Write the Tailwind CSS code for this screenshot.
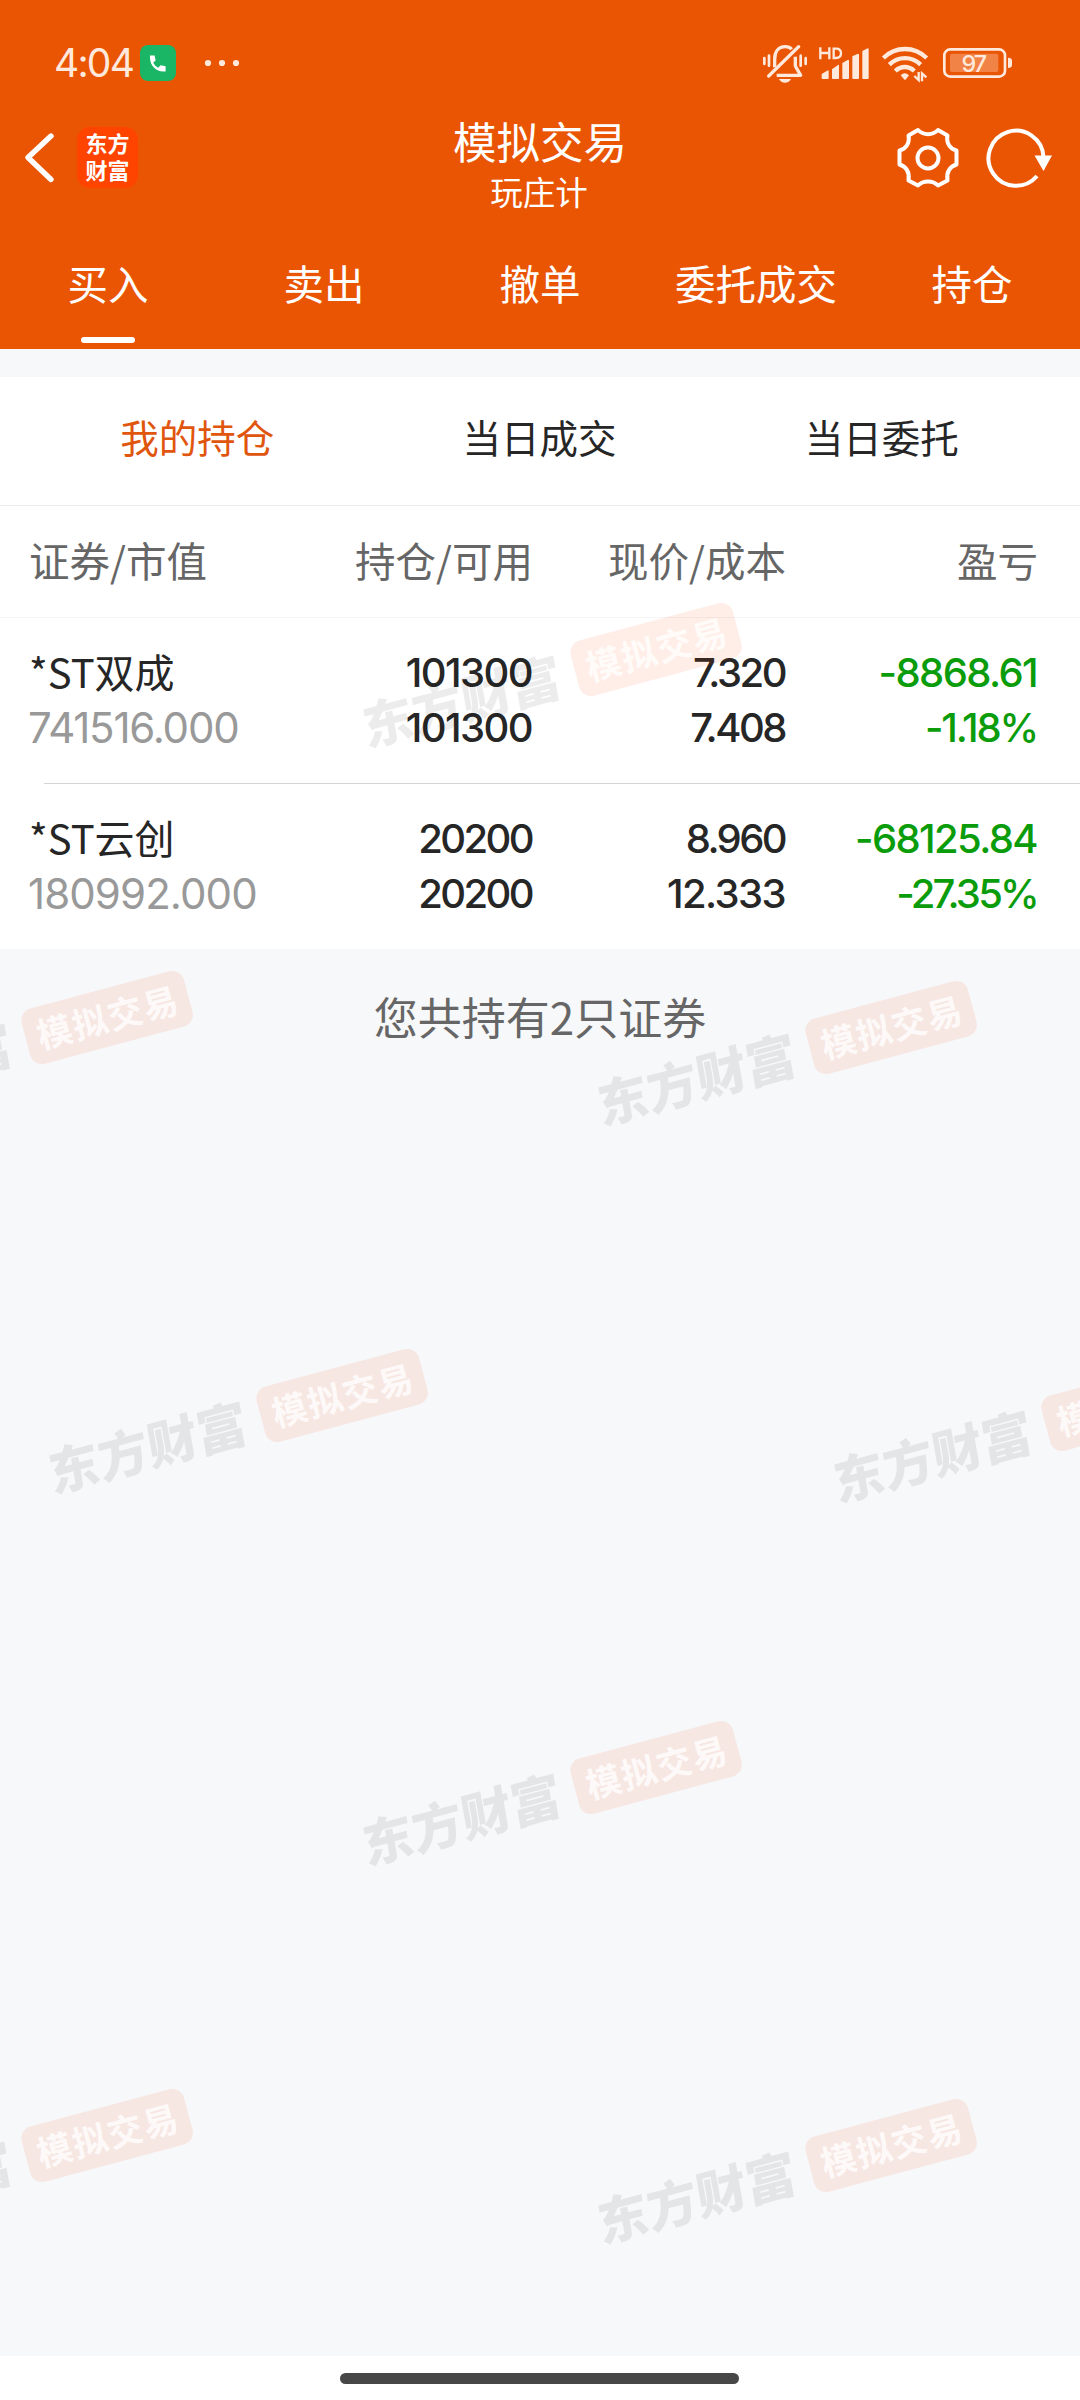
<!DOCTYPE html>
<html lang="zh-CN">
<head>
  <meta charset="UTF-8" />
  <meta name="viewport" content="width=device-width, initial-scale=1" />
  <title>模拟交易</title>
  <!-- Tailwind CSS -->
  <script src="https://cdn.jsdelivr.net/npm/@tailwindcss/browser@4"></script>
</head>
<body class="bg-white">
  <div class="relative flex h-[2400px] w-[1080px] flex-col overflow-hidden bg-[#f7f8fa] font-['Noto_Sans_CJK_SC',sans-serif] text-[#262626]">

    <header class="flex h-[349px] flex-col bg-[#ea5504] text-white">
      <!-- Status bar -->
      <div class="flex h-[106px] items-start pt-[44px] pl-[54px] text-[#ffe9dc]">
        <span class="h-[38px] w-[86px] font-['Inter',sans-serif] text-[39px] leading-[38px] tracking-[-1.8px]">4:04</span>
        <svg class="mt-px h-9 w-9" viewBox="0 0 36 36">
          <rect width="36" height="36" rx="8" fill="#1bb566" />
          <path d="M10 10.5h4.600l1 5-2.400 2.200c1.300 2.400 2.800 3.800 5 5l2.400-2.400 5 1v5.200h-2.200C16 26.500 10 20.500 10 12.700z" fill="#fff" />
        </svg>
        <svg class="mt-[15px] ml-[28px] h-2 w-[36px]" viewBox="0 0 36 8" fill="#ffe9dc">
          <circle cx="4" cy="4" r="3.100" /><circle cx="18" cy="4" r="3.100" /><circle cx="32" cy="4" r="3.100" />
        </svg>
        <!-- Muted bell -->
        <svg class="ml-auto h-10 w-[46px]" viewBox="66 72 138 120" fill="none" stroke="#ffe9dc" stroke-width="10">
          <path d="M86 168L176 80" stroke-linecap="round" />
          <path d="M104 142v-24c0-24 12-38 31-38 9 0 16 3 20 8M166 110v28l16 28H110" stroke-linejoin="round" />
          <path d="M117 177h36c-3 7-10 11-18 11s-15-4-18-11z" fill="#ffe9dc" stroke="none" />
          <path d="M73 114v18M87 107v30M182 107v30M197 114v18" stroke-linecap="round" stroke-width="8" />
        </svg>
        <!-- Signal -->
        <svg class="ml-[10px] h-10 w-[52px]" viewBox="234 72 156 120" fill="#ffe9dc">
          <path d="M241 82v36M268 82v36M241 99h27M281 86v28h7c10 0 15-5 15-14s-5-14-15-14z" fill="none" stroke="#ffe9dc" stroke-width="7" />
          <path d="M245 162l19-11q2 0 2 3v20q0 3-3 3h-15q-3 0-3-3zM276 148l19-14q2 0 2 3v37q0 3-3 3h-15q-3 0-3-3zM307 129l17-10q3 0 3 3v52q0 3-3 3h-14q-3 0-3-3zM337 109l17-8q3 0 3 3v70q0 3-3 3h-14q-3 0-3-3zM367 93l16-8q3 0 3 3v86q0 3-3 3h-13q-3 0-3-3z" />
        </svg>
        <!-- Wifi -->
        <svg class="ml-[11px] h-10 w-[48px]" viewBox="423 72 144 120" fill="none" stroke="#ffe9dc" stroke-width="13">
          <path d="M430 114c37-36 93-36 130 0M448 134c27-26 67-26 94 0M466 153c17-16 40-16 57 0" />
          <path d="M482 166q12-12 25 0l-9 12q-3 3-6 0z" fill="#ffe9dc" stroke="none" />
          <path d="M536 156v24l-13-12M546 184v-24l13 12" stroke-width="7" />
        </svg>
        <!-- Battery -->
        <svg class="mr-[67px] ml-[13px] h-10 w-[71px]" viewBox="606 72 213 120">
          <rect x="613" y="88" width="182" height="82" rx="18" fill="none" stroke="#ffe9dc" stroke-width="8" />
          <rect x="630" y="101" width="145" height="55" rx="6" fill="#f28346" />
          <path d="M804 113q12 0 12 9v13q0 9-12 9z" fill="#ffe9dc" />
          <text x="700" y="155" text-anchor="middle" font-family="Inter, sans-serif" font-size="70" letter-spacing="-6" font-weight="500" fill="#ffe9dc">97</text>
        </svg>
      </div>

      <!-- Title bar -->
      <div class="grid h-[116px] grid-cols-[1fr_240px_1fr]">
        <div class="flex items-start pt-[21px] pl-[23px]">
          <svg class="mt-1 h-[54px] w-8" viewBox="0 0 32 54" fill="none" stroke="#fff" stroke-width="5.400" stroke-linecap="round" stroke-linejoin="round"><path d="M28 5L5 26.500l23 22" /></svg>
          <div class="ml-[22px] flex h-[61px] w-[61px] flex-col items-center rounded-[13px] bg-[#ff4400] pt-[2px] text-[22px] leading-[27px] font-bold">
            <span>东方</span>
            <span>财富</span>
          </div>
        </div>
        <div class="text-center">
          <h1 class="h-[60px] text-[43.5px] leading-[69px]">模拟交易</h1>
          <p class="pr-[2px] text-[32.5px] leading-[49px]">玩庄计</p>
        </div>
        <div class="flex items-start justify-end pt-[20px] pr-[26px]">
          <svg class="h-16 w-16" viewBox="-32 -32 64 64" fill="none" stroke="#fff" stroke-width="4" stroke-linejoin="round">
            <circle r="10.500" />
            <path d="M-10-28C-5-22.500 5-22.500 10-28L19.500-22.500C18-15 22-9 28.500-7.500V6.500C22 8.500 18 14 19.500 22.500L10 27.500C5 22 -5 22 -10 27.500L-19.500 22.500C-18 14-22 8.500-28.500 6.500V-7.500C-22-9-18-15-19.500-22.500z" />
          </svg>
          <svg class="ml-[24px] h-16 w-[70px]" viewBox="-32 -32 70 64">
            <path d="M27.500-1A27.500 27.500 0 1 0 21 18" fill="none" stroke="#fff" stroke-width="4" />
            <path d="M18.500-2.500h17.500L27.500 13z" fill="#fff" />
          </svg>
        </div>
      </div>

      <!-- Main tabs -->
      <nav class="grid flex-1 grid-cols-5 text-center text-[40.5px] leading-[121px]">
        <div class="flex flex-col items-center">
          <span class="h-[115px]">买入</span>
          <span class="h-[6px] w-[54px] rounded-full bg-white"></span>
        </div>
        <div>卖出</div>
        <div>撤单</div>
        <div class="whitespace-nowrap">委托成交</div>
        <div>持仓</div>
      </nav>
    </header>

    <main class="mt-[28px] bg-white">
      <!-- Sub tabs -->
      <div class="grid h-[129px] grid-cols-3 border-b border-[#ebebeb] pr-[27px] pl-[26px] text-center text-[38.5px] leading-[118px]">
        <div class="text-[#e0560e]">我的持仓</div>
        <div>当日成交</div>
        <div>当日委托</div>
      </div>

      <div class="grid h-[112px] grid-cols-[250px_254px_253px_252px] border-b border-[#f5f5f5] pl-[29px] text-right text-[40.5px] leading-[107px] text-[#666]">
        <div class="text-left">证券/市值</div>
        <div>持仓/可用</div>
        <div>现价/成本</div>
        <div>盈亏</div>
      </div>

      <div class="grid h-[165px] grid-cols-[250px_253px_253px_252px] pt-[27px] pl-[29px] text-right font-['Inter','Noto_Sans_CJK_SC',sans-serif] text-[40px] leading-[55px] font-medium tracking-[-1.6px]">
        <div class="text-left">
          <div class="font-['Noto_Sans_CJK_SC',sans-serif] text-[40px] leading-[53px] font-normal tracking-normal">*ST双成</div>
          <div class="-ml-px text-[42px] leading-[59px] font-normal tracking-[-1.2px] text-[#999]">741516.000</div>
        </div>
        <div><div>101300</div><div>101300</div></div>
        <div class="tracking-[-2.5px]"><div>7.320</div><div>7.408</div></div>
        <div class="text-[#0a9c0a]"><div>-8868.61</div><div class="tracking-[-2.2px]">-1.18%</div></div>
      </div>
      <div class="ml-[44px] h-px bg-[#d4d4d4]"></div>
      <div class="grid h-[165px] grid-cols-[250px_253px_253px_252px] pt-[27px] pl-[29px] text-right font-['Inter','Noto_Sans_CJK_SC',sans-serif] text-[40px] leading-[55px] font-medium tracking-[-1.6px]">
        <div class="text-left">
          <div class="font-['Noto_Sans_CJK_SC',sans-serif] text-[40px] leading-[53px] font-normal tracking-normal">*ST云创</div>
          <div class="-ml-px text-[42px] leading-[59px] font-normal tracking-[-0.9px] text-[#999]">180992.000</div>
        </div>
        <div class="tracking-[-2.6px]"><div>20200</div><div>20200</div></div>
        <div><div class="tracking-[-2.6px]">8.960</div><div>12.333</div></div>
        <div class="text-[#0a9c0a]"><div>-68125.84</div><div class="tracking-[-2.8px]">-27.35%</div></div>
      </div>
    </main>

    <p class="flex-1 pt-[32px] text-center text-[44px] leading-[70px] text-[#666]">您共持有2只证券</p>

    <footer class="flex h-[44px] justify-center bg-white pt-[17px] pr-[2px]">
      <div class="h-[11px] w-[399px] rounded-full bg-[#474747]"></div>
    </footer>

    <!-- Watermark layer -->
    <svg class="pointer-events-none absolute inset-0" width="1080" height="2400" viewBox="0 0 1080 2400" font-family="Noto Sans CJK SC, sans-serif">
      <defs>
        <g id="mark" transform="rotate(-15)">
          <rect x="-84" y="-28" width="168" height="57" rx="12" fill="#ff4200" fill-opacity=".09" />
          <text x="1" y="14" text-anchor="middle" font-size="35" letter-spacing="1.500" font-weight="700" fill="#fff" fill-opacity=".8">模拟交易</text>
          <text transform="translate(-305 20) skewX(-5)" font-size="51" font-weight="900" fill="#000" fill-opacity=".075">东方财富</text>
        </g>
      </defs>
      <use href="#mark" x="656" y="649" />
      <use href="#mark" x="107" y="1017" />
      <use href="#mark" x="891" y="1027" />
      <use href="#mark" x="342" y="1395" />
      <use href="#mark" x="1127" y="1404" />
      <use href="#mark" x="656" y="1767" />
      <use href="#mark" x="107" y="2135" />
      <use href="#mark" x="891" y="2145" />
    </svg>
  </div>
</body>
</html>
